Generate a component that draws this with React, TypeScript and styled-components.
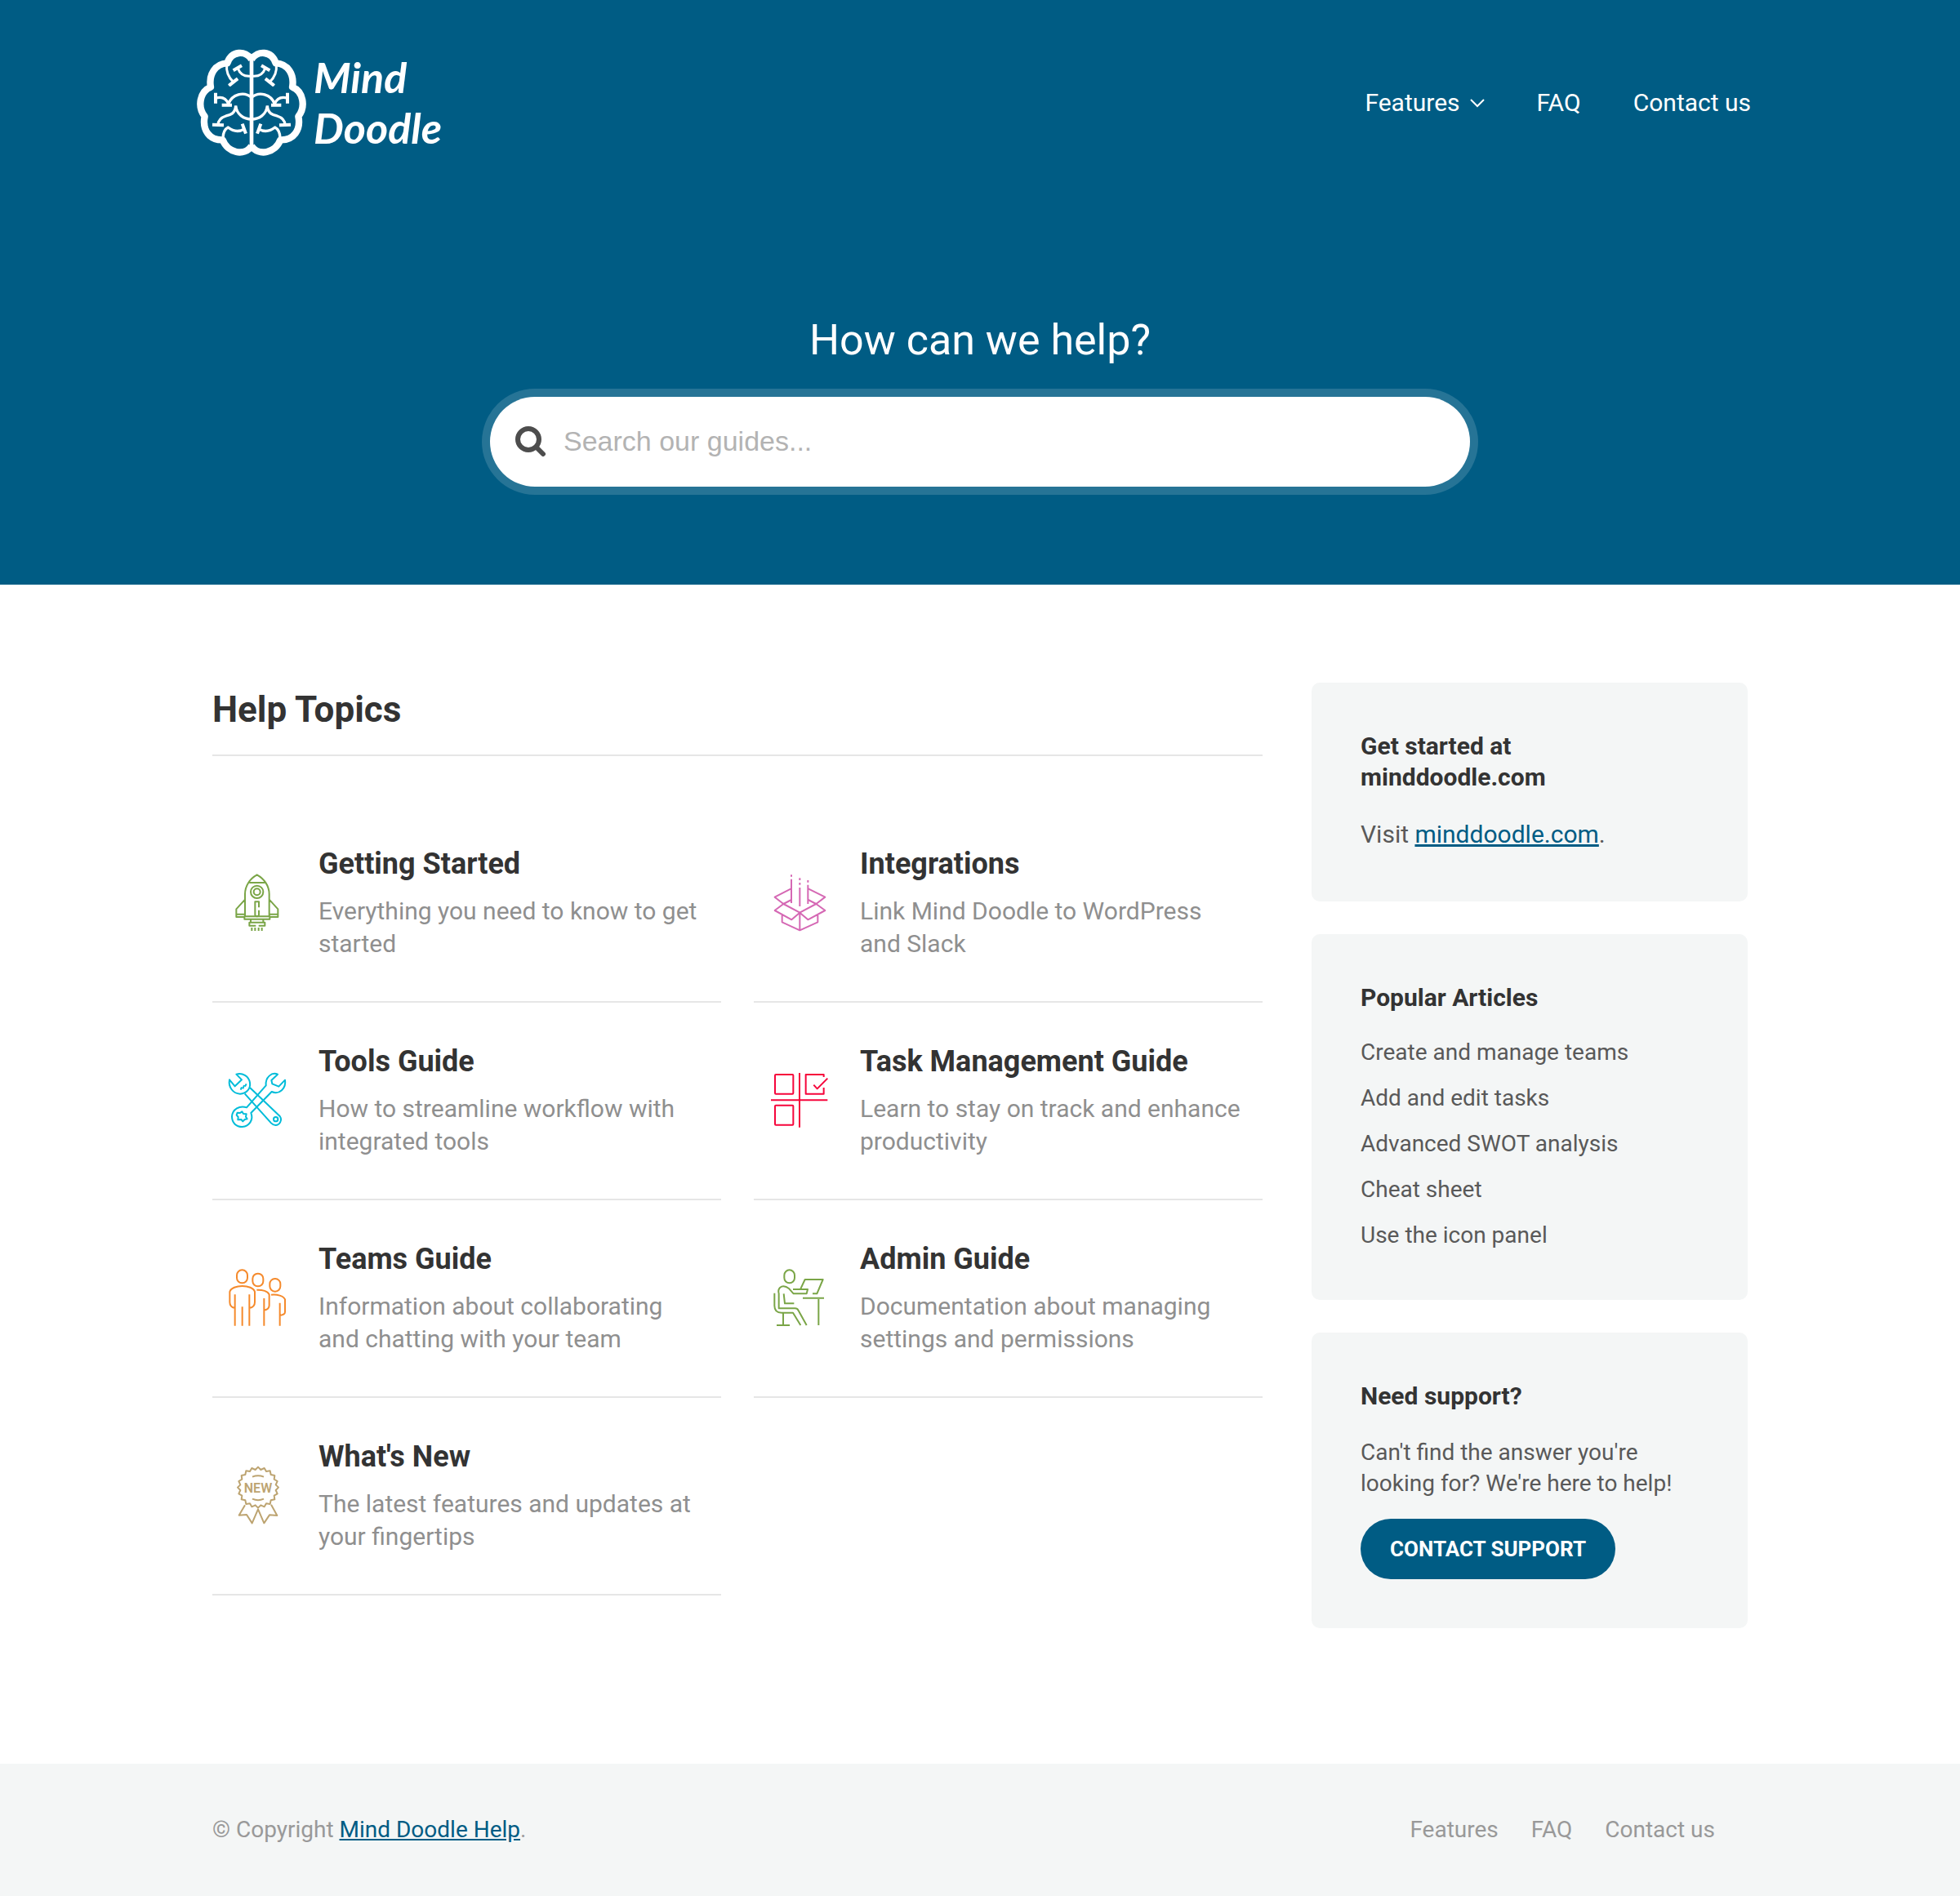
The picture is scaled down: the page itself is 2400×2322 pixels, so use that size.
import React from "react";
import styled, { createGlobalStyle } from "styled-components";

const brand = "#005c84";
const panel = "#f4f6f6";
const rule = "#e6e6e6";
const ink = "#333333";
const sans = `Roboto, "Liberation Sans", sans-serif`;

const GlobalStyle = createGlobalStyle`
  *, *::before, *::after { box-sizing: border-box; }
  body { margin: 0; background: #ffffff; font-family: ${sans}; color: #595959; }
  h1, h2, h3, p, ul { margin: 0; padding: 0; }
  ul { list-style: none; }
`;

/* ---------- Header ---------- */

const Header = styled.header`
  background: ${brand};
  color: #ffffff;
  padding: 60px 0 120px;
`;

const Bar = styled.div`
  max-width: 1960px;
  margin: 0 auto;
  padding: 0 36px 0 20px;
  display: flex;
  align-items: center;
  justify-content: space-between;
`;

const LogoLink = styled.a`
  display: flex;
  align-items: center;
  gap: 8px;
  height: 130px;
  color: #ffffff;
  text-decoration: none;
`;

const Wordmark = styled.span`
  display: flex;
  flex-direction: column;
  font: italic 700 52px/62px Lato, ${sans};
`;

const Nav = styled.nav`
  display: flex;
  gap: 64px;
  padding-top: 2px;
`;

const NavLink = styled.a`
  display: flex;
  align-items: center;
  gap: 12px;
  color: #ffffff;
  font-size: 30px;
  line-height: 40px;
  text-decoration: none;
`;

const Hero = styled.div`
  display: flex;
  flex-direction: column;
  align-items: center;
  gap: 38px;
  padding: 196px 40px 0;
`;

const HeroTitle = styled.h1`
  font-size: 52px;
  line-height: 62px;
  font-weight: 400;
`;

const SearchBox = styled.form`
  display: flex;
  align-items: center;
  gap: 20px;
  width: 100%;
  max-width: 1200px;
  height: 110px;
  padding: 0 30px 2px;
  border-radius: 55px;
  background: #ffffff;
  box-shadow: 0 0 0 10px rgba(255, 255, 255, 0.15);
`;

const SearchInput = styled.input`
  flex: 1;
  min-width: 0;
  border: 0;
  padding: 0;
  outline: 0;
  background: transparent;
  color: ${ink};
  font: 400 34px/44px "Liberation Sans", sans-serif;
  &::placeholder { color: #b3b3b3; opacity: 1; }
`;

/* ---------- Content ---------- */

const Content = styled.div`
  max-width: 1960px;
  margin: 0 auto;
  padding: 120px 40px 166px;
  display: grid;
  grid-template-columns: minmax(0, 1fr) 534px;
  gap: 60px;
  align-items: start;
`;

const SectionTitle = styled.h2`
  padding-bottom: 22px;
  border-bottom: 2px solid ${rule};
  color: ${ink};
  font-size: 44px;
  line-height: 66px;
  font-weight: 700;
`;

const TopicGrid = styled.ul`
  display: grid;
  grid-template-columns: 1fr 1fr;
  column-gap: 40px;
  margin-top: 60px;
`;

const TopicItem = styled.li`
  display: flex;
  align-items: center;
  gap: 20px;
  padding: 48px 20px 50px 0;
  border-bottom: 2px solid ${rule};
`;

const IconSlot = styled.div`
  flex: none;
  width: 110px;
  display: flex;
  justify-content: center;
`;

const TopicIcon = styled.svg`
  width: 80px;
  height: 80px;
  fill: none;
  stroke: ${(p) => p.color};
  stroke-width: 6;
  stroke-linejoin: round;
`;

const TopicBody = styled.div`
  display: flex;
  flex-direction: column;
  gap: 14px;
`;

const TopicTitle = styled.h3`
  font-size: 36px;
  line-height: 48px;
  font-weight: 700;
`;

const TopicLink = styled.a`
  color: ${ink};
  text-decoration: none;
`;

const TopicText = styled.p`
  color: #8f8f8f;
  font-size: 30px;
  line-height: 40px;
`;

/* ---------- Sidebar ---------- */

const Sidebar = styled.aside`
  display: flex;
  flex-direction: column;
  gap: 40px;
`;

const Card = styled.section`
  padding: 59px 60px 60px;
  border-radius: 10px;
  background: ${panel};
`;

const CardTitle = styled.h3`
  color: ${ink};
  font-size: 30px;
  line-height: 38px;
  font-weight: 700;
`;

const Visit = styled.p`
  margin-top: 30px;
  padding-bottom: 1px;
  font-size: 30px;
  line-height: 42px;
`;

const TextLink = styled.a`
  color: ${brand};
  text-decoration: underline;
`;

const ArticleList = styled.ul`
  display: flex;
  flex-direction: column;
  gap: 18px;
  margin-top: 29px;
  font-size: 28px;
  line-height: 38px;
`;

const ArticleLink = styled.a`
  color: inherit;
  text-decoration: none;
`;

const SupportText = styled.p`
  margin: 31px 0 24px;
  font-size: 28px;
  line-height: 38px;
`;

const SupportButton = styled.button`
  display: block;
  height: 74px;
  padding: 0 36px;
  border: 0;
  border-radius: 37px;
  background: ${brand};
  color: #ffffff;
  font: 700 26px/34px ${sans};
  text-transform: uppercase;
  white-space: nowrap;
`;

/* ---------- Footer ---------- */

const Footer = styled.footer`
  background: ${panel};
  color: #999999;
  font-size: 28px;
  line-height: 42px;
`;

const FooterInner = styled.div`
  max-width: 1960px;
  margin: 0 auto;
  padding: 60px 80px 60px 40px;
  display: flex;
  justify-content: space-between;
`;

const FooterNav = styled.nav`
  display: flex;
  gap: 40px;
`;

/* ---------- Drawings ---------- */

const BrainHalf = () => (
  <>
    <path strokeWidth="25" d="M232 66C210 32 158 34 143 80C98 82 74 122 82 168C42 184 32 240 60 276C50 326 78 364 126 362C144 410 206 424 232 384" />
    <path strokeWidth="9" d="M141 84C138 112 146 132 166 150M148 162L181 137M182 99C190 122 208 130 232 127" />
    <path strokeWidth="12" d="M165 107L196 89M150 162L181 137M100 189V228M123 234H160M88 306L130 308M198 303L211 339" />
    <path strokeWidth="10" d="M102 208C126 202 140 212 147 230C160 194 204 182 232 206M174 236C178 270 204 286 232 286M174 236C172 266 154 270 138 274C120 280 110 290 109 306M127 354C128 338 134 322 146 316C166 332 188 332 206 322" />
  </>
);

const Brain = () => (
  <svg width="136" height="131" viewBox="28 28 408 393" fill="none" stroke="#ffffff" strokeLinejoin="round" aria-hidden="true">
    <BrainHalf />
    <g transform="matrix(-1 0 0 1 464 0)">
      <BrainHalf />
    </g>
    <path strokeWidth="14" d="M232 50V396" />
  </svg>
);

const Chevron = () => (
  <svg width="18" height="12" viewBox="0 0 18 12" fill="none" stroke="#ffffff" strokeWidth="2" aria-hidden="true">
    <path d="M1 2L9 10L17 2" />
  </svg>
);

const Magnifier = () => (
  <svg width="40" height="40" viewBox="0 0 40 40" fill="none" stroke="#4d4d4d" strokeLinecap="round" aria-hidden="true">
    <circle cx="17" cy="18" r="13" strokeWidth="6" />
    <path strokeWidth="6" d="M27 28L35 36" />
  </svg>
);

const Rocket = () => (
  <TopicIcon color="#7aa547" viewBox="15 45 240 240" aria-hidden="true">
    <path d="M90 217V135C90 105 108 78 134 64C160 78 179 105 179 135V217M106 93H163M90 155L58 190V219H90M179 155L211 190V219H179M58 209H90M179 209H211M88 217H181V227H88ZM111 230V238M157 230V238M130 251H106V239H163V251H140" />
    <circle cx="134" cy="127" r="23" />
    <circle cx="134" cy="127" r="12" />
    <path d="M141 184V163H127V211Q127 217 134 217Q141 217 141 211V194M115 258V270M127 258V270M140 258V270M152 258V270" />
  </TopicIcon>
);

const OpenBox = () => (
  <TopicIcon color="#d568b4" viewBox="24 45 240 240" aria-hidden="true">
    <path d="M116 115L56 146L88 171L56 195L118 229L148 203L178 229L241 195L208 171L241 146L179 115M88 171L117 156M208 171L179 156M88 171L148 203L208 171M83 211V238L148 268L214 238V211M148 203V268" />
    <path d="M117 64V71M117 80V168M148 76V84M148 93V101M148 111V180M178 84V92M178 101V171" />
  </TopicIcon>
);

const Wrenches = () => (
  <TopicIcon color="#00bcd9" viewBox="15 21 240 240" aria-hidden="true">
    <path d="M33 67L53 91L78 67L58 47C80 40 104 54 108 78C111 100 96 118 72 119C46 118 28 94 33 67Z" />
    <path d="M108 96L218 201C228 214 218 234 202 234C196 234 190 230 186 226L89 118" />
    <path d="M187 69L210 47C188 38 164 58 167 88L96 169C70 160 44 176 42 202C42 226 58 240 80 240C106 238 122 214 112 189L188 111C216 124 242 98 237 68L214 92L190 82Z" />
    <path d="M62 188L72 189L79 184L84 192L95 193L93 203L98 211L89 213L82 220L76 213L64 214L65 204L59 197Z" />
    <circle cx="203" cy="212" r="8" />
    <path d="M78 94L74 104M87 87L82 100M95 82L90 92" />
  </TopicIcon>
);

const Board = () => (
  <TopicIcon color="#f6053b" viewBox="24 21 240 240" aria-hidden="true">
    <rect x="57" y="48" width="67" height="71" rx="3" />
    <rect x="57" y="161" width="67" height="72" rx="3" />
    <path d="M236 57V48H170V119H236V96M199 86L212 100L250 62M147 42V242M42 142H250" />
  </TopicIcon>
);

const People = () => (
  <TopicIcon color="#f58a2c" viewBox="45 57 240 240" aria-hidden="true">
    <rect x="90" y="76" width="39" height="48" rx="19" />
    <rect x="148" y="89" width="39" height="47" rx="19" />
    <rect x="211" y="108" width="39" height="47" rx="19" />
    <path d="M83 281V166M83 216Q64 212 64 194V156C72 128 148 128 156 156V194Q156 212 136 216M136 166V281M110 211V281M163 149C184 148 204 154 209 166V206Q209 220 190 224M190 180V281M216 167C238 164 262 172 267 184V230Q267 240 248 243M248 197V281" />
  </TopicIcon>
);

const DeskWorker = () => (
  <TopicIcon color="#7aa547" viewBox="-3 0 240 240" aria-hidden="true">
    <rect x="64" y="19" width="38" height="48" rx="19" />
    <path d="M28 104V150Q28 176 54 176H96L124 222M96 90H150L146 106H98L82 88Q62 72 48 84Q40 92 44 106V160H104Q112 160 116 168L146 222M62 106L66 142H100" />
    <path d="M124 88L140 54H206L184 106H168M132 122H210M190 126V222M60 176V222M36 222H84" />
  </TopicIcon>
);

const badgePoints = Array.from({ length: 40 }, (_, i) => {
  const angle = (Math.PI * i) / 20 - Math.PI / 2;
  const radius = i % 2 ? 66 : 75;
  return `${Math.round(138 + radius * Math.cos(angle))},${Math.round(125 + radius * Math.sin(angle))}`;
}).join(" ");

const Badge = () => (
  <TopicIcon color="#bda471" viewBox="15 33 240 240" aria-hidden="true">
    <polygon points={badgePoints} />
    <path d="M90 190L68 227L96 225L116 256L138 205L160 256L180 226L208 228L186 188M117 86Q138 78 159 86M117 167Q138 176 159 167" />
    <text x="138" y="144" textAnchor="middle" fill="#bda471" stroke="none" fontFamily="Roboto, sans-serif" fontSize="48" fontWeight="600">NEW</text>
  </TopicIcon>
);

const topics = [
  { title: "Getting Started", text: "Everything you need to know to get started", Icon: Rocket },
  { title: "Integrations", text: "Link Mind Doodle to WordPress and Slack", Icon: OpenBox },
  { title: "Tools Guide", text: "How to streamline workflow with integrated tools", Icon: Wrenches },
  { title: "Task Management Guide", text: "Learn to stay on track and enhance productivity", Icon: Board },
  { title: "Teams Guide", text: "Information about collaborating and chatting with your team", Icon: People },
  { title: "Admin Guide", text: "Documentation about managing settings and permissions", Icon: DeskWorker },
  { title: "What's New", text: "The latest features and updates at your fingertips", Icon: Badge },
];

const articles = [
  "Create and manage teams",
  "Add and edit tasks",
  "Advanced SWOT analysis",
  "Cheat sheet",
  "Use the icon panel",
];

const footerLinks = ["Features", "FAQ", "Contact us"];

export default function App() {
  return (
    <>
      <GlobalStyle />
      <Header>
        <Bar>
          <LogoLink href="#">
            <Brain />
            <Wordmark>
              <span>Mind</span>
              <span>Doodle</span>
            </Wordmark>
          </LogoLink>
          <Nav>
            <NavLink href="#">
              Features
              <Chevron />
            </NavLink>
            <NavLink href="#">FAQ</NavLink>
            <NavLink href="#">Contact us</NavLink>
          </Nav>
        </Bar>
        <Hero>
          <HeroTitle>How can we help?</HeroTitle>
          <SearchBox role="search">
            <Magnifier />
            <SearchInput type="text" placeholder="Search our guides..." aria-label="Search our guides" />
          </SearchBox>
        </Hero>
      </Header>

      <Content>
        <main>
          <SectionTitle>Help Topics</SectionTitle>
          <TopicGrid>
            {topics.map(({ title, text, Icon }) => (
              <TopicItem key={title}>
                <IconSlot>
                  <Icon />
                </IconSlot>
                <TopicBody>
                  <TopicTitle>
                    <TopicLink href="#">{title}</TopicLink>
                  </TopicTitle>
                  <TopicText>{text}</TopicText>
                </TopicBody>
              </TopicItem>
            ))}
          </TopicGrid>
        </main>
        <Sidebar>
          <Card>
            <CardTitle>Get started at minddoodle.com</CardTitle>
            <Visit>
              Visit <TextLink href="#">minddoodle.com</TextLink>.
            </Visit>
          </Card>
          <Card>
            <CardTitle>Popular Articles</CardTitle>
            <ArticleList>
              {articles.map((article) => (
                <li key={article}>
                  <ArticleLink href="#">{article}</ArticleLink>
                </li>
              ))}
            </ArticleList>
          </Card>
          <Card>
            <CardTitle>Need support?</CardTitle>
            <SupportText>Can't find the answer you're looking for? We're here to help!</SupportText>
            <SupportButton type="button">Contact Support</SupportButton>
          </Card>
        </Sidebar>
      </Content>

      <Footer>
        <FooterInner>
          <p>
            © Copyright <TextLink href="#">Mind Doodle Help</TextLink>.
          </p>
          <FooterNav>
            {footerLinks.map((label) => (
              <ArticleLink href="#" key={label}>
                {label}
              </ArticleLink>
            ))}
          </FooterNav>
        </FooterInner>
      </Footer>
    </>
  );
}
